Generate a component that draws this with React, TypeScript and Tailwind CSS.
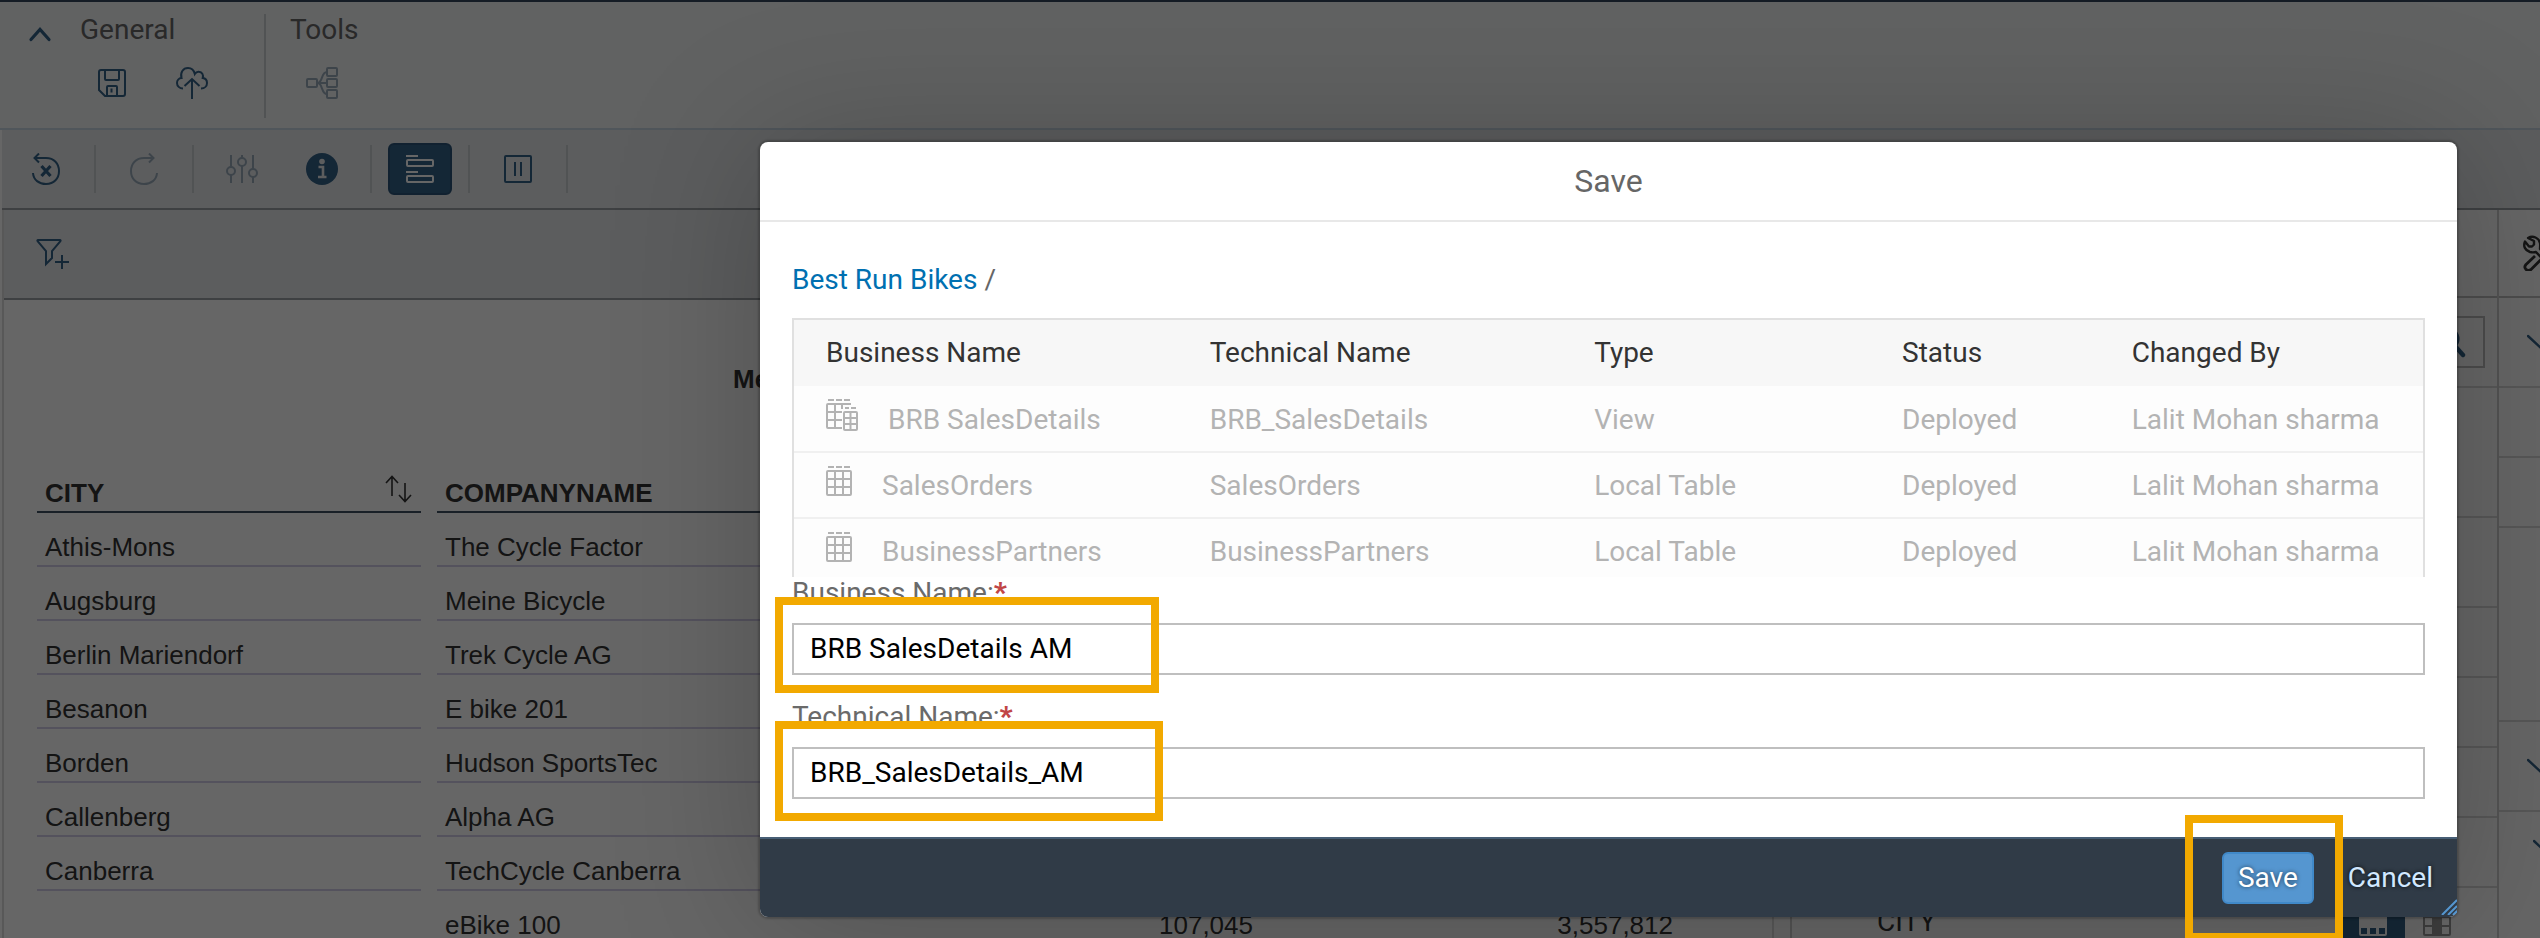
import type { ReactNode } from "react";

function Svg({ w, h, children }: { w: number; h: number; children: ReactNode }) {
  return (
    <svg
      width={w}
      height={h}
      viewBox={`0 0 ${w} ${h}`}
      fill="none"
      stroke="currentColor"
      strokeWidth={2}
      aria-hidden="true"
      className="shrink-0"
    >
      {children}
    </svg>
  );
}

const ChevronUp = () => (
  <Svg w={24} h={16}>
    <path d="M3 13.5 12 3.5l9 10" strokeWidth={3.2} strokeLinecap="round" />
  </Svg>
);

const ChevronDown = () => (
  <Svg w={28} h={16}>
    <path d="M1 2l13 12L27 2" strokeWidth={2.4} strokeLinecap="round" />
  </Svg>
);

const SaveIcon = () => (
  <Svg w={32} h={32}>
    <path d="M5 3h22a2 2 0 0 1 2 2v22a2 2 0 0 1-2 2H9l-6-6V5a2 2 0 0 1 2-2z" />
    <path d="M9 3v9a1 1 0 0 0 1 1h12a1 1 0 0 0 1-1V3M11 29v-9a1 1 0 0 1 1-1h8a1 1 0 0 1 1 1v9M15.5 21.5v4" />
  </Svg>
);

const CloudUpload = () => (
  <Svg w={32} h={32}>
    <path d="M7 21.5C3.500 21.500 1 19 1 16c0-2.600 1.800-4.800 4.500-5C4 5.500 7 1 12 1c3.500 0 6 2.500 6.800 6 1-1.600 2.600-2.400 4.200-2.200 3 .3 4.700 2.900 3.700 6.200 2.600.3 4.300 2.300 4.300 5 0 3-2.300 5.500-6 5.500" />
    <path d="M16 32V12.500M8.500 19 16 12l7.500 7" />
  </Svg>
);

const NetworkIcon = () => (
  <Svg w={32} h={32}>
    <rect x="1" y="12" width="10" height="8" rx="1" />
    <rect x="21" y="1" width="10" height="8" rx="1" />
    <rect x="21" y="12" width="10" height="8" rx="1" />
    <rect x="21" y="23" width="10" height="8" rx="1" />
    <path d="M11 16h10M12 16c5-1 3-11 9-11M12 16c5 1 3 11 9 11" />
  </Svg>
);

const ResetIcon = () => (
  <Svg w={32} h={32}>
    <path d="M3 20c.5 7 6 11 13 11 8 0 13-5.500 13-13S24 5 16 5H5" />
    <path d="M9 .5 4.500 5 9 9.500" />
    <path d="M11.500 13l9 10M20.500 13l-9 10" strokeWidth={3.2} />
  </Svg>
);

const RedoIcon = () => (
  <Svg w={32} h={32}>
    <path d="M29 20c-.5 7-6 11-13 11C8 31 3 25.500 3 18S8 5 16 5h10" />
    <path d="M21 .5 25.500 5 21 9.500" />
  </Svg>
);

const SlidersIcon = () => (
  <Svg w={32} h={32}>
    <path d="M5 2v12M5 22v8M16 2v3M16 13v17M27 2v14M27 24v6" />
    <circle cx="5" cy="18" r="4" />
    <circle cx="16" cy="9" r="4" />
    <circle cx="27" cy="20" r="4" />
  </Svg>
);

const InfoIcon = () => (
  <Svg w={32} h={32}>
    <circle cx="16" cy="16" r="16" fill="currentColor" stroke="none" />
    <circle cx="16" cy="8.500" r="2.800" fill="#e6e9ec" stroke="none" />
    <path d="M12.500 14h4.500v10M12 24h8.500" stroke="#e6e9ec" strokeWidth={2.6} />
  </Svg>
);

const BarsIcon = () => (
  <Svg w={28} h={28}>
    <path d="M0 1h12M0 17h12" />
    <rect x="1" y="5" width="26" height="6" rx="1" />
    <rect x="1" y="21" width="26" height="6" rx="1" />
  </Svg>
);

const ColumnsIcon = () => (
  <Svg w={28} h={28}>
    <rect x="1" y="1" width="26" height="26" rx="1" />
    <path d="M11 7v14M17 7v14" />
  </Svg>
);

const FilterAdd = () => (
  <Svg w={34} h={32}>
    <path d="M2 2h22c.6 0 .8.600.4 1.200L16 13v7l-6 6V13L1.600 3.200C1.200 2.600 1.400 2 2 2z" />
    <path d="M26 17v14M19 24h14" />
  </Svg>
);

const SortIcon = () => (
  <Svg w={28} h={28}>
    <path d="M7 21V2M1 8l6-6.500L13 8M20 8v18M14 20l6 6.500 6-6.500" strokeWidth={1.6} />
  </Svg>
);

const TableIcon = () => (
  <Svg w={26} h={30}>
    <path d="M2 1h6M10 1h6M18 1h6" />
    <rect x="1" y="5" width="24" height="24" rx="1" />
    <path d="M9 5v24M17 5v24M1 13h24M1 21h24" />
  </Svg>
);

const ViewIcon = () => (
  <Svg w={32} h={32}>
    <path d="M2 1h6M10 1h6M18 1h6" />
    <path d="M25 5H2a1 1 0 0 0-1 1v22a1 1 0 0 0 1 1h14M9 5v24M16 5v5M1 13h15M1 21h15" />
    <path d="M19 9h4M25 9h5" />
    <rect x="18" y="13" width="13" height="18" rx="1" />
    <path d="M24.500 13v18M18 19h13M18 25h13" />
  </Svg>
);

const ToolsIcon = () => (
  <Svg w={36} h={36}>
    <path
      d="M5 3c5-3 11 0 12 5 .4 2 0 4 0 6l15 15c2 3-1 6-4 4L13 17c-2 .5-4 .5-6 0C2 15.500 0 11 2 6.500l4 5h3l2-2V6L5 3z"
      strokeWidth={2.4}
      strokeLinejoin="round"
    />
    <path d="M12 21l-9 8.500c-3 3.500 1 7.500 5 5l10-10" strokeWidth={2.8} strokeLinejoin="round" />
  </Svg>
);

const SearchIcon = () => (
  <Svg w={32} h={32}>
    <circle cx="13" cy="13" r="10" strokeWidth={3} />
    <path d="M20 20l8 9" strokeWidth={4.4} strokeLinecap="round" />
  </Svg>
);

const RowsLayout = () => (
  <Svg w={28} h={28}>
    <rect x="1" y="1" width="26" height="26" rx="1" fill="currentColor" />
    <path d="M2 20h6v6H2zM11 20h6v6h-6zM20 20h6v6h-6z" fill="#346187" stroke="none" />
  </Svg>
);

const ColumnLayout = () => (
  <Svg w={28} h={28}>
    <rect x="1" y="1" width="26" height="26" rx="1" />
    <path d="M9 1h10v26H9z" fill="currentColor" stroke="none" />
    <path d="M1 9h26M1 18h26" />
  </Svg>
);

function ToolButton({ label, muted, children }: { label: string; muted?: boolean; children: ReactNode }) {
  return (
    <button
      type="button"
      aria-label={label}
      className={`flex h-[52px] w-16 items-center justify-center ${muted ? "text-[#99aaba]" : "text-[#346187]"}`}
    >
      {children}
    </button>
  );
}

const Divider = () => <span className="h-12 w-0.5 bg-[#cbcfd3]" />;

const rows = [
  { city: "Athis-Mons", company: "The Cycle Factor" },
  { city: "Augsburg", company: "Meine Bicycle" },
  { city: "Berlin Mariendorf", company: "Trek Cycle AG" },
  { city: "Besanon", company: "E bike 201" },
  { city: "Borden", company: "Hudson SportsTec" },
  { city: "Callenberg", company: "Alpha AG" },
  { city: "Canberra", company: "TechCycle Canberra" },
  { city: "", company: "eBike 100", price: "107,045", total: "3,557,812" },
];

const objects = [
  { view: true, name: "BRB SalesDetails", tech: "BRB_SalesDetails", type: "View" },
  { view: false, name: "SalesOrders", tech: "SalesOrders", type: "Local Table" },
  { view: false, name: "BusinessPartners", tech: "BusinessPartners", type: "Local Table" },
];

function Ribbon() {
  return (
    <header className="flex h-[130px] shrink-0 border-t-2 border-b-2 border-t-[#35475e] border-b-[#c9d8e3] bg-[#f3f5f6] text-[#666]">
      <button type="button" aria-label="Collapse" className="ml-7 mt-6 h-4 w-6 text-[#346187]">
        <ChevronUp />
      </button>
      <section className="ml-7 pt-2.5">
        <h2 className="leading-9">General</h2>
        <div className="mt-[9px] flex gap-4">
          <ToolButton label="Save">
            <SaveIcon />
          </ToolButton>
          <ToolButton label="Deploy">
            <CloudUpload />
          </ToolButton>
        </div>
      </section>
      <span className="ml-10 mt-3 h-[104px] w-0.5 bg-[#cbcfd3]" />
      <section className="ml-6 pt-2.5">
        <h2 className="leading-9">Tools</h2>
        <div className="mt-[9px]">
          <ToolButton label="Data lineage" muted>
            <NetworkIcon />
          </ToolButton>
        </div>
      </section>
    </header>
  );
}

function Toolbar() {
  return (
    <nav className="ml-0.5 flex h-20 shrink-0 items-center border-b-2 border-[#9ba0a6] bg-[#e6e9ec] pl-3">
      <ToolButton label="Reset">
        <ResetIcon />
      </ToolButton>
      <span className="w-4" />
      <Divider />
      <span className="w-4" />
      <ToolButton label="Redo" muted>
        <RedoIcon />
      </ToolButton>
      <span className="w-4" />
      <Divider />
      <span className="w-4" />
      <ToolButton label="Settings" muted>
        <SlidersIcon />
      </ToolButton>
      <span className="w-4" />
      <ToolButton label="Details">
        <InfoIcon />
      </ToolButton>
      <span className="w-4" />
      <Divider />
      <button
        type="button"
        aria-label="Designer"
        className="mx-4 flex h-[52px] w-16 items-center justify-center rounded-md border-2 border-[#2b5478] bg-[#346187] text-white"
      >
        <BarsIcon />
      </button>
      <Divider />
      <span className="w-4" />
      <ToolButton label="Columns">
        <ColumnsIcon />
      </ToolButton>
      <span className="w-4" />
      <Divider />
    </nav>
  );
}

function Canvas() {
  const cell = "border-b-2 border-[#d3cde8] px-2 align-bottom leading-9";
  const head = "border-b-2 border-[#3f5161] px-2 align-bottom leading-9";
  return (
    <main className="ml-0.5 min-w-0 flex-1 border-x-2 border-x-[#dcdcdc]">
      <div className="flex h-[90px] items-center border-b-2 border-[#9ba0a6] bg-[#e6e9ec] pl-8 text-[#346187]">
        <button type="button" aria-label="Add filter" className="flex">
          <FilterAdd />
        </button>
      </div>
      <table className="ml-[17px] table-fixed border-separate border-spacing-x-4 border-spacing-y-0 font-['Liberation_Sans',Arial,sans-serif] text-[26px] text-[#333]">
        <colgroup>
          <col className="w-[384px]" />
          <col className="w-[403px]" />
          <col className="w-[405px]" />
          <col className="w-[404px]" />
        </colgroup>
        <thead>
          <tr className="h-[97px]">
            <td />
            <th scope="colgroup" colSpan={3} className="pl-[296px] text-left align-bottom leading-9">
              Measures
            </th>
          </tr>
          <tr className="h-[116px] text-left">
            <th scope="col" className={head}>
              <span className="flex items-end justify-between">
                CITY
                <button type="button" aria-label="Sort" className="pb-2">
                  <SortIcon />
                </button>
              </span>
            </th>
            <th scope="col" className={head}>
              COMPANYNAME
            </th>
            <td className={head} />
            <td className={head} />
          </tr>
        </thead>
        <tbody>
          {rows.map((r) => (
            <tr key={r.company} className="h-[54px]">
              <td className={r.city ? cell : "px-2"}>{r.city}</td>
              <td className={cell}>{r.company}</td>
              <td className={`${cell} text-right`}>{r.price}</td>
              <td className={`${cell} text-right`}>{r.total}</td>
            </tr>
          ))}
        </tbody>
      </table>
    </main>
  );
}

function SidePanels() {
  const line = "shrink-0 border-b-2 border-[#d9d9d9]";
  return (
    <>
      <aside className="ml-4 flex w-[709px] shrink-0 flex-col border-x-2 border-[#d0d0d0]">
        <div className="h-[88px] shrink-0 border-b-2 border-[#c0c0c0]" />
        <div className={`${line} flex h-[90px] items-center justify-end pr-3`}>
          <button
            type="button"
            aria-label="Search"
            className="flex h-[52px] w-16 items-center justify-center border-2 border-[#bfbfbf] pr-1 text-[#346187]"
          >
            <SearchIcon />
          </button>
        </div>
        <div className={`${line} h-[130px]`} />
        <div className={`${line} h-[90px]`} />
        <div className={`${line} h-[70px]`} />
        <div className={`${line} h-[70px]`} />
        <div className={`${line} h-[70px]`} />
        <div className={`${line} h-[70px]`} />
        <div className={`${line} flex h-[70px] items-center pl-[85px] pr-7`}>
          <span className="flex-1 text-[#333]">CITY</span>
          <button type="button" aria-label="Rows" className="flex h-[52px] w-16 items-center justify-center bg-[#346187] text-white">
            <RowsLayout />
          </button>
          <button type="button" aria-label="Columns" className="flex h-[52px] w-16 items-center justify-center text-[#999]">
            <ColumnLayout />
          </button>
        </div>
      </aside>
      <aside className="flex w-[41px] shrink-0 flex-col overflow-hidden text-[#346187]">
        <div className="flex h-[88px] shrink-0 items-center border-b-2 border-[#c0c0c0] pl-6 text-[#333]">
          <ToolsIcon />
        </div>
        <div className={`${line} flex h-[90px] items-center pl-7`}>
          <ChevronDown />
        </div>
        <div className={`${line} h-[70px]`} />
        <div className={`${line} h-[70px]`} />
        <div className={`${line} h-[194px]`} />
        <div className={`${line} flex h-[90px] items-center pl-7`}>
          <ChevronDown />
        </div>
        <div className="flex h-[70px] shrink-0 items-center pl-[34px]">
          <ChevronDown />
        </div>
      </aside>
    </>
  );
}

function Field({ id, label, value, children }: { id: string; label: string; value: string; children: ReactNode }) {
  return (
    <div className="relative">
      <label htmlFor={id} className="block leading-8 text-[#6a6a6a]">
        {label}
        <span className="font-black text-[#c14646]">*</span>
      </label>
      <input
        id={id}
        defaultValue={value}
        className="mt-3.5 block h-[52px] w-full border-2 border-[#bfbfbf] bg-white px-4 pb-0.5 text-black outline-none"
      />
      {children}
    </div>
  );
}

function SaveDialog() {
  return (
    <section
      role="dialog"
      aria-label="Save"
      className="absolute left-[760px] right-[83px] top-[142px] rounded-lg bg-white shadow-[0_0_2px_2px_rgba(0,0,0,0.2),0_4px_150px_0_rgba(0,0,0,0.22)]"
    >
      <h1 className="flex h-20 items-center justify-center border-b-2 border-[#e8e8e8] text-[32px] text-[#666]">Save</h1>
      <div className="px-8 pb-[38px] pt-10">
        <p className="leading-9 text-[#666]">
          <a href="#space" className="text-[#0070b1]">
            Best Run Bikes
          </a>{" "}
          /
        </p>
        <div className="mt-5 h-[259px] overflow-hidden border-2 border-b-0 border-[#e0e0e0]">
          <table className="w-full table-fixed border-collapse text-left">
            <colgroup>
              <col className="w-[24.6%]" />
              <col className="w-[23.6%]" />
              <col className="w-[18.9%]" />
              <col className="w-[14.1%]" />
              <col />
            </colgroup>
            <thead className="bg-[#f7f7f7] text-[#333]">
              <tr className="h-[66px]">
                <th className="pl-8 font-normal">Business Name</th>
                <th className="pl-[15px] font-normal">Technical Name</th>
                <th className="pl-[15px] font-normal">Type</th>
                <th className="pl-[15px] font-normal">Status</th>
                <th className="pl-[15px] font-normal">Changed By</th>
              </tr>
            </thead>
            <tbody className="bg-[#fdfdfd] text-[#b3b3b3]">
              {objects.map((o) => (
                <tr key={o.name} className="h-[66px] border-b-2 border-[#f0f0f0]">
                  <td className="pl-8 pt-0.5">
                    <span className="flex items-center gap-[30px]">
                      <span className="pb-2.5">{o.view ? <ViewIcon /> : <TableIcon />}</span>
                      {o.name}
                    </span>
                  </td>
                  <td className="pl-[15px] pt-0.5">{o.tech}</td>
                  <td className="pl-[15px] pt-0.5">{o.type}</td>
                  <td className="pl-[15px] pt-0.5">Deployed</td>
                  <td className="pl-[15px] pt-0.5">Lalit Mohan sharma</td>
                </tr>
              ))}
            </tbody>
          </table>
        </div>
        <form className="flex flex-col gap-[26px]">
          <Field id="business-name" label="Business Name:" value="BRB SalesDetails AM">
            <span className="pointer-events-none absolute -left-[17px] top-5 h-24 w-96 border-8 border-[#f2a900]" />
          </Field>
          <Field id="technical-name" label="Technical Name:" value="BRB_SalesDetails_AM">
            <span className="pointer-events-none absolute -left-[17px] top-5 h-[100px] w-[388px] border-8 border-[#f2a900]" />
          </Field>
        </form>
      </div>
      <footer className="relative flex h-20 items-center justify-end gap-[18px] rounded-b-lg border-t-2 border-[#475e75] bg-[#303b47] pr-2">
        <div className="relative">
          <button
            type="button"
            className="h-[52px] rounded-md border-2 border-[#4089c9] bg-[#5596d0] px-3.5 text-white [text-shadow:0_0_4px_rgba(0,0,0,0.6)]"
          >
            Save
          </button>
          <span className="pointer-events-none absolute -left-[37px] -top-[37px] h-[126px] w-[158px] border-8 border-[#f2a900]" />
        </div>
        <button type="button" className="h-[52px] px-4 text-[#d1e8ff] [text-shadow:0_0_4px_rgba(0,0,0,0.9)]">
          Cancel
        </button>
        <span className="absolute bottom-0.5 right-0 text-[#5596d0]">
          <Svg w={16} h={16}>
            <path d="M1 16 16 1M7 16l9-9M12 16l4-4" />
          </Svg>
        </span>
      </footer>
    </section>
  );
}

export default function App() {
  return (
    <div className="relative flex h-screen flex-col overflow-hidden bg-white font-[Roboto,'Noto_Sans',sans-serif] text-[28px]">
      <Ribbon />
      <Toolbar />
      <div className="flex min-h-0 flex-1">
        <Canvas />
        <SidePanels />
      </div>
      <div className="absolute inset-0 bg-black/60" />
      <SaveDialog />
    </div>
  );
}
